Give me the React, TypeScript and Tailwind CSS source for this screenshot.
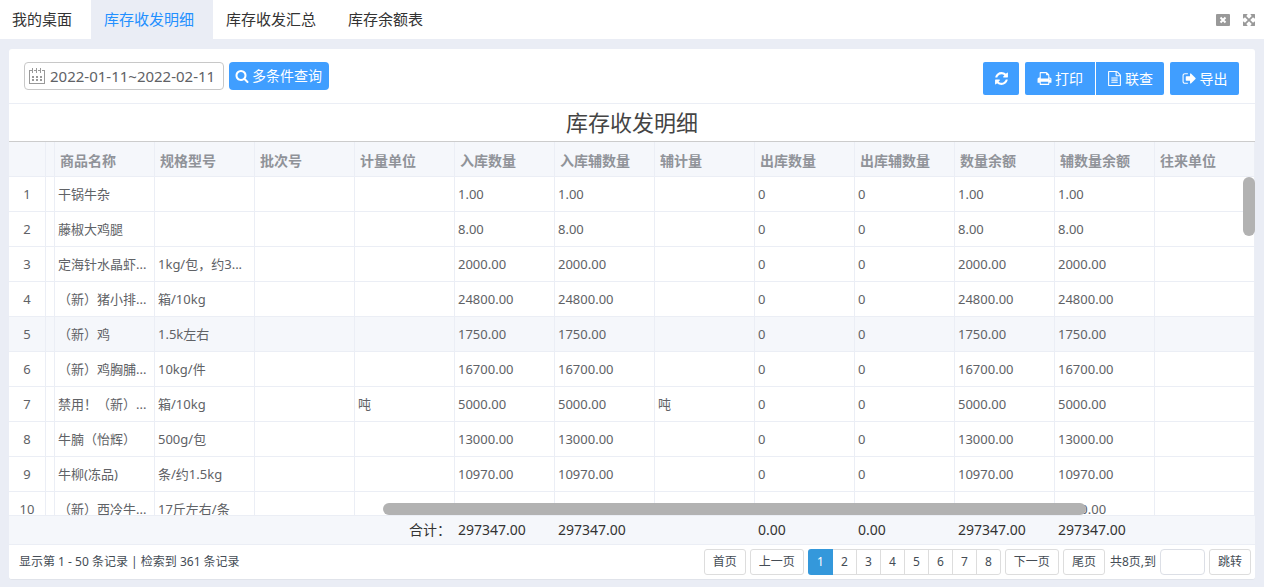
import type { ReactNode } from "react";

type IconProps = { d: string; className: string };

function Icon({ d, className }: IconProps) {
  return (
    <svg viewBox="0 0 1792 1792" fill="currentColor" aria-hidden="true" className={className}>
      <path d={d} />
    </svg>
  );
}

const SEARCH =
  "M1216 832q0-185-131.5-316.5t-316.5-131.5-316.5 131.5-131.5 316.5 131.5 316.5 316.5 131.5 316.5-131.5 131.5-316.5zm512 832q0 52-38 90t-90 38q-54 0-90-38l-343-342q-179 124-399 124-143 0-273.5-55.5t-225-150-150-225-55.5-273.5 55.5-273.5 150-225 225-150 273.5-55.5 273.5 55.5 225 150 150 225 55.5 273.5q0 220-124 399l343 343q37 37 37 90z";
const REFRESH =
  "M1639 1056q0 5-1 7-64 268-268 434.5t-478 166.5q-146 0-282.5-55t-243.5-157l-129 129q-19 19-45 19t-45-19-19-45v-448q0-26 19-45t45-19h448q26 0 45 19t19 45-19 45l-137 137q71 66 161 102t187 36q134 0 250-65t186-179q11-17 53-117 8-23 30-23h192q13 0 22.5 9.5t9.5 22.5zm25-800v448q0 26-19 45t-45 19h-448q-26 0-45-19t-19-45 19-45l138-138q-148-137-349-137-134 0-250 65t-186 179q-11 17-53 117-8 23-30 23h-199q-13 0-22.5-9.5t-9.5-22.5v-7q65-268 270-434.5t480-166.5q146 0 284 55.5t245 156.5l130-129q19-19 45-19t45 19 19 45z";
const PRINT =
  "M448 1536h896v-256h-896v256zm0-640h896v-384h-160q-40 0-68-28t-28-68v-160h-640v640zm1152 64q0-26-19-45t-45-19-45 19-19 45 19 45 45 19 45-19 19-45zm128 0v416q0 13-9.5 22.5t-22.5 9.5h-224v160q0 40-28 68t-68 28h-960q-40 0-68-28t-28-68v-160h-224q-13 0-22.5-9.5t-9.5-22.5v-416q0-79 56.5-135.5t135.5-56.5h64v-544q0-40 28-68t68-28h672q40 0 88 20t76 48l152 152q28 28 48 76t20 88v256h64q79 0 135.5 56.5t56.5 135.5z";
const FILE_TEXT =
  "M1596 380q28 28 48 76t20 88v1152q0 40-28 68t-68 28h-1344q-40 0-68-28t-28-68v-1600q0-40 28-68t68-28h896q40 0 88 20t76 48zm-444-244v376h376q-10-29-22-41l-313-313q-12-12-41-22zm384 1528v-1024h-416q-40 0-68-28t-28-68v-416h-768v1536h1280zm-1024-864q0-14 9-23t23-9h704q14 0 23 9t9 23v64q0 14-9 23t-23 9h-704q-14 0-23-9t-9-23v-64zm736 224q14 0 23 9t9 23v64q0 14-9 23t-23 9h-704q-14 0-23-9t-9-23v-64q0-14 9-23t23-9h704zm0 256q14 0 23 9t9 23v64q0 14-9 23t-23 9h-704q-14 0-23-9t-9-23v-64q0-14 9-23t23-9h704z";
const SIGN_OUT =
  "M704 1440q0 4 1 20t.5 26.5-3 23.5-10 19.5-20.5 6.5h-320q-119 0-203.5-84.5t-84.5-203.5v-704q0-119 84.5-203.5t203.5-84.5h320q13 0 22.5 9.5t9.5 22.5q0 4 1 20t.5 26.5-3 23.5-10 19.5-20.5 6.5h-320q-66 0-113 47t-47 113v704q0 66 47 113t113 47h312l11.5 1 11.5 3 8 5.5 7 9 2 13.5zm928-544q0 26-19 45l-544 544q-19 19-45 19t-45-19-19-45v-288h-448q-26 0-45-19t-19-45v-384q0-26 19-45t45-19h448v-288q0-26 19-45t45-19 45 19l544 544q19 19 19 45z";
const ARROWS =
  "M1411 541l-355 355 355 355 144-144q29-31 70-14 39 17 39 59v448q0 26-19 45t-45 19h-448q-42 0-59-40-17-39 14-69l144-144-355-355-355 355 144 144q31 30 14 69-17 40-59 40h-448q-26 0-45-19t-19-45v-448q0-42 40-59 39-17 69 14l144 144 355-355-355-355-144 144q-19 19-45 19-12 0-24-5-40-17-40-59v-448q0-26 19-45t45-19h448q42 0 59 40 17 39-14 69l-144 144 355 355 355-355-144-144q-31-30-14-69 17-40 59-40h448q26 0 45 19t19 45v448q0 42-39 59-13 5-25 5-26 0-45-19z";

const TABS = ["我的桌面", "库存收发明细", "库存收发汇总", "库存余额表"];

const HEADERS = [
  "商品名称", "规格型号", "批次号", "计量单位", "入库数量", "入库辅数量",
  "辅计量", "出库数量", "出库辅数量", "数量余额", "辅数量余额", "往来单位",
];

type Item = { name: string; spec: string; unit: string; qty: string };

const ITEMS: Item[] = [
  { name: "干锅牛杂", spec: "", unit: "", qty: "1.00" },
  { name: "藤椒大鸡腿", spec: "", unit: "", qty: "8.00" },
  { name: "定海针水晶虾...", spec: "1kg/包，约3...", unit: "", qty: "2000.00" },
  { name: "（新）猪小排...", spec: "箱/10kg", unit: "", qty: "24800.00" },
  { name: "（新）鸡", spec: "1.5k左右", unit: "", qty: "1750.00" },
  { name: "（新）鸡胸脯...", spec: "10kg/件", unit: "", qty: "16700.00" },
  { name: "禁用！（新）...", spec: "箱/10kg", unit: "吨", qty: "5000.00" },
  { name: "牛腩（怡辉）", spec: "500g/包", unit: "", qty: "13000.00" },
  { name: "牛柳(冻品)", spec: "条/约1.5kg", unit: "", qty: "10970.00" },
  { name: "（新）西冷牛...", spec: "17斤左右/条", unit: "", qty: "1000.00" },
];

const TOTAL = "297347.00";
const TOTALS = ["", "", "", "合计：", TOTAL, TOTAL, "", "0.00", "0.00", TOTAL, TOTAL, ""];

function Columns() {
  return (
    <colgroup>
      <col className="w-[37px]" />
      <col className="w-[9px]" />
      {HEADERS.slice(0, -1).map((h) => (
        <col key={h} className="w-[100px]" />
      ))}
      <col />
    </colgroup>
  );
}

function ToolButton({ label, className, children }: { label: string; className: string; children: ReactNode }) {
  return (
    <button
      type="button"
      aria-label={label}
      className={`flex h-[33px] items-center justify-center gap-[3px] bg-[#409eff] text-sm text-white ${className}`}
    >
      {children}
    </button>
  );
}

function PageButton({ children }: { children: ReactNode }) {
  return (
    <button type="button" className="h-[26px] rounded-[3px] border border-[#dddddd] bg-white px-2">
      {children}
    </button>
  );
}

export default function App() {
  return (
    <div className="flex h-screen flex-col bg-[#eaedf5] font-['Noto_Sans','Noto_Sans_CJK_SC',sans-serif] text-[#606266]">
      <header className="flex h-[39px] shrink-0 items-center justify-between bg-white pr-2">
        <nav className="flex h-full text-[15px] text-[#333333]">
          {TABS.map((tab, i) => (
            <a
              key={tab}
              href="#"
              className={
                i === 1
                  ? "flex items-center bg-[#eaedf5] pr-[19px] pl-[13px] text-[#2390ff]"
                  : i === 0
                    ? "flex items-center pr-[19px] pl-3"
                    : "flex items-center pr-[19px] pl-[13px]"
              }
            >
              {tab}
            </a>
          ))}
        </nav>
        <div className="flex items-center gap-3 text-[#999999]">
          <button type="button" aria-label="关闭">
            <svg viewBox="0 0 14 12" className="block h-3 w-3.5">
              <rect width="14" height="12" rx="1" fill="currentColor" />
              <path d="M4.5 3.5l5 5M9.5 3.5l-5 5" stroke="#fff" strokeWidth="2" />
            </svg>
          </button>
          <button type="button" aria-label="全屏">
            <Icon d={ARROWS} className="block h-3.5 w-3.5" />
          </button>
        </div>
      </header>

      <main className="mx-[9px] mt-2.5 mb-[7px] flex min-h-0 flex-1 flex-col overflow-hidden rounded-[3px] border-b border-[#e0e3ea] bg-white">
        <div className="flex shrink-0 items-start justify-between border-b border-[#ebeef5] pt-[13px] pr-4 pb-2 pl-[15px]">
          <div className="flex gap-[5px]">
            <label className="flex h-7 w-[200px] items-center gap-[5px] rounded-[4px] border border-[#c8c8c8] pl-1">
              <svg viewBox="0 0 16 16" shapeRendering="crispEdges" className="h-4 w-4 shrink-0 text-[#999999]" aria-hidden="true">
                <path
                  fill="none"
                  stroke="currentColor"
                  strokeWidth="1"
                  d="M3 2.5H.5V15.5H15.5V2.5H13M5 2.5H7M9 2.5H11M3.5 0V5M7.5 0V5M11.5 0V5"
                />
                <path
                  fill="currentColor"
                  d="M3 8h2v2H3zM7 8h2v2H7zM11 8h2v2h-2zM3 11h2v2H3zM7 11h2v2H7zM11 11h2v2h-2z"
                />
              </svg>
              <input
                type="text"
                aria-label="日期范围"
                defaultValue="2022-01-11~2022-02-11"
                className="w-full min-w-0 bg-transparent text-[15px] outline-none"
              />
            </label>
            <button type="button" className="flex h-7 items-center gap-[3px] rounded-[4px] bg-[#409eff] pr-[7px] pl-1.5 text-sm text-white">
              <Icon d={SEARCH} className="h-3.5 w-3.5" />
              多条件查询
            </button>
          </div>
          <div className="flex">
            <ToolButton label="刷新" className="mr-1.5 w-9 rounded-[2px]">
              <Icon d={REFRESH} className="h-[15px] w-[15px]" />
            </ToolButton>
            <ToolButton label="打印" className="mr-px w-[70px] rounded-l-[2px]">
              <Icon d={PRINT} className="h-[15px] w-[15px]" />
              打印
            </ToolButton>
            <ToolButton label="联查" className="mr-1.5 w-[68px] rounded-r-[2px]">
              <Icon d={FILE_TEXT} className="h-[15px] w-[15px]" />
              联查
            </ToolButton>
            <ToolButton label="导出" className="w-[69px] rounded-[2px]">
              <Icon d={SIGN_OUT} className="h-[15px] w-[15px]" />
              导出
            </ToolButton>
          </div>
        </div>

        <h1 className="flex h-[37px] shrink-0 items-center justify-center text-[22px] text-[#444444]">库存收发明细</h1>

        <table className="w-full shrink-0 table-fixed border-separate border-spacing-0 border-t border-[#cccccc] bg-[#f5f7fb] text-sm text-[#909399]">
          <Columns />
          <thead>
            <tr className="h-[35px]">
              <th className="border-r border-b border-[#ebeef5]" />
              <th className="border-r border-b border-[#ebeef5]" />
              {HEADERS.map((h) => (
                <th key={h} className="border-r border-b border-[#ebeef5] pt-[3px] pr-0 pb-0 pl-[5px] text-left font-bold whitespace-nowrap">
                  {h}
                </th>
              ))}
            </tr>
          </thead>
        </table>

        <div className="relative min-h-0 flex-1 overflow-hidden">
          <table className="w-full table-fixed border-separate border-spacing-0 text-[13px]">
            <Columns />
            <tbody>
              {ITEMS.map((r, i) => {
                const cells = [r.name, r.spec, "", r.unit, r.qty, r.qty, r.unit, "0", "0", r.qty, r.qty, ""];
                return (
                  <tr key={r.name} className={i === 4 ? "h-[35px] bg-[#f5f7fb]" : "h-[35px]"}>
                    <td className="border-r border-b border-[#ebeef5] px-0 pt-0.5 pb-0 text-center">{i + 1}</td>
                    <td className="border-r border-b border-[#ebeef5] p-0" />
                    {cells.map((c, j) => (
                      <td key={j} className="overflow-hidden border-r border-b border-[#ebeef5] pt-0.5 pr-0 pb-0 pl-[3px] whitespace-nowrap">
                        {c}
                      </td>
                    ))}
                  </tr>
                );
              })}
            </tbody>
          </table>
          <div className="absolute top-0 right-0 h-[59px] w-3 rounded-full bg-[#b2b2b2]" />
          <div className="absolute bottom-0 left-[30%] h-3 w-[56.4%] rounded-full bg-[#b2b2b2]" />
        </div>

        <table className="w-full shrink-0 table-fixed border-separate border-spacing-0 border-y border-[#ebeef5] bg-[#f5f7fb] text-sm text-[#333333]">
          <Columns />
          <tbody>
            <tr className="h-7">
              <td className="p-0" />
              <td className="p-0" />
              {TOTALS.map((t, j) => (
                <td key={j} className={j === 3 ? "py-0 pr-1 pl-0 text-right" : "py-0 pr-0 pl-[3px]"}>
                  {t}
                </td>
              ))}
            </tr>
          </tbody>
        </table>

        <footer className="flex h-[34px] shrink-0 items-center justify-between pr-1 pl-2.5 text-xs text-[#444c55]">
          <p>显示第 1 - 50 条记录 | 检索到 361 条记录</p>
          <div className="flex items-center">
            <div className="flex gap-1">
              <PageButton>首页</PageButton>
              <PageButton>上一页</PageButton>
              <div className="flex overflow-hidden rounded-[3px]">
                {[1, 2, 3, 4, 5, 6, 7, 8].map((n) => (
                  <button
                    key={n}
                    type="button"
                    className={
                      n === 1
                        ? "h-[26px] w-[25px] bg-[#3498db] text-white"
                        : "h-[26px] w-6 border-y border-r border-[#dddddd] bg-white last:rounded-r-[3px]"
                    }
                  >
                    {n}
                  </button>
                ))}
              </div>
              <PageButton>下一页</PageButton>
              <PageButton>尾页</PageButton>
            </div>
            <label className="ml-[5px] flex items-center gap-1">
              共8页,到
              <input type="text" className="h-[26px] w-[45px] rounded-[4px] border border-[#dcdfe6] px-1" />
            </label>
            <div className="ml-1 flex">
              <PageButton>跳转</PageButton>
            </div>
          </div>
        </footer>
      </main>
    </div>
  );
}
